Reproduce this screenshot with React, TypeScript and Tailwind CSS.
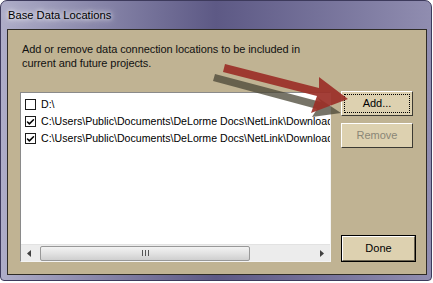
import { Check } from 'lucide-react';

const PATH = 'C:\\Users\\Public\\Documents\\DeLorme Docs\\NetLink\\Downloads\\Base Data';

const items = [
  { label: 'D:\\', checked: false },
  { label: PATH, checked: true },
  { label: PATH, checked: true },
];

function CheckBox({ checked }: { checked: boolean }) {
  return (
    <div className="w-[11px] h-[11px] border border-[#1c1c1c] bg-white flex items-center justify-center shrink-0">
      {checked && <Check size={10} strokeWidth={4} className="text-black" />}
    </div>
  );
}

function ScrollBar() {
  return (
    <div className="h-[17px] bg-[#ececec] border-t border-[#e2e2e2] flex items-center shrink-0">
      <div className="w-[17px] flex items-center justify-center">
        <svg width="5" height="7" viewBox="0 0 5 7">
          <path d="M4 0 L0 3.5 L4 7 Z" fill="#404040" />
        </svg>
      </div>
      <div className="ml-[2px] w-[210px] h-[15px] rounded-[2px] border border-[#989898] bg-gradient-to-b from-[#f2f2f2] via-[#e2e2e2] to-[#cfcfcf] flex items-center justify-center">
        <div className="flex gap-[2px]">
          <div className="w-px h-[6px] bg-[#555]" />
          <div className="w-px h-[6px] bg-[#555]" />
          <div className="w-px h-[6px] bg-[#555]" />
        </div>
      </div>
      <div className="flex-1" />
      <div className="w-[17px] flex items-center justify-center">
        <svg width="5" height="7" viewBox="0 0 5 7">
          <path d="M1 0 L5 3.5 L1 7 Z" fill="#404040" />
        </svg>
      </div>
    </div>
  );
}

function Button({ children, variant }: { children: string; variant?: 'focus' | 'disabled' | 'default' }) {
  if (variant === 'default') {
    return (
      <div className="w-[75px] h-[27px] border border-black bg-[#ddd1b0] flex">
        <div className="flex-1 border border-t-white border-l-white border-b-[#6b6452] border-r-[#6b6452] flex items-center justify-center text-black">
          {children}
        </div>
      </div>
    );
  }
  return (
    <div className="w-[72px] h-[25px] bg-[#ddd1b0] border border-t-white border-l-white border-b-[#3c3a33] border-r-[#3c3a33] flex p-[2px]">
      <div
        className={`flex-1 flex items-center justify-center ${
          variant === 'focus' ? 'border border-dotted border-black text-black' : 'text-[#8a8676]'
        }`}
      >
        {children}
      </div>
    </div>
  );
}

export default function App() {
  return (
    <div className="w-[433px] h-[283px] bg-white overflow-hidden" style={{ fontFamily: '"Liberation Sans", Arial, sans-serif' }}>
      <div className="relative w-[432px] h-[281px] rounded-t-[7px] rounded-b-[4px] border border-[#3d3a5c] bg-gradient-to-r from-[#aeadc8] via-[#5d5985] to-[#908db0] flex flex-col">
        <div className="h-[28px] flex items-center pl-[7px] text-[11.2px] text-black shrink-0">
          <span className="[text-shadow:0_0_8px_#fff,0_0_4px_#fff]">Base Data Locations</span>
        </div>
        <div className="flex-1 ml-[6px] mr-[4px] mb-[5px] border border-[#2e2b26] bg-[#c0b393] text-[11px] flex flex-col">
          <div className="pl-[14px] pt-[12px] leading-[14px] text-[#111] tracking-[-0.08px]">
            <div>Add or remove data connection locations to be included in</div>
            <div>current and future projects.</div>
          </div>
          <div className="flex mt-[22px] pl-[12px]">
            <div className="w-[311px] h-[170px] bg-white border border-t-[#8a8a8a] border-l-[#8a8a8a] border-b-[#f4f4f4] border-r-[#f4f4f4] flex flex-col overflow-hidden">
              <div className="flex-1 pt-[3px] pl-[4px] text-[10.6px]">
                {items.map((it, i) => (
                  <div key={i} className="h-[17px] flex items-center gap-[5px] whitespace-nowrap text-black">
                    <CheckBox checked={it.checked} />
                    <span>{it.label}</span>
                  </div>
                ))}
              </div>
              <ScrollBar />
            </div>
            <div className="ml-[10px] flex flex-col">
              <div className="-mt-[1px]">
                <Button variant="focus">Add...</Button>
              </div>
              <div className="mt-[7px]">
                <Button variant="disabled">Remove</Button>
              </div>
              <div className="mt-[87px]">
                <Button variant="default">Done</Button>
              </div>
            </div>
          </div>
        </div>
        <svg className="absolute left-0 top-0 pointer-events-none" width="433" height="283" viewBox="0 0 433 283">
          <polygon points="214,73 320,101 316,96 340,112 311,116 316,108 212,80" fill="#4a4536" fillOpacity="0.75" />
          <polygon points="224,63 318,87 318,76 347,98 310,112 316,95 222,71" fill="#9b2f27" fillOpacity="0.92" />
        </svg>
      </div>
    </div>
  );
}
